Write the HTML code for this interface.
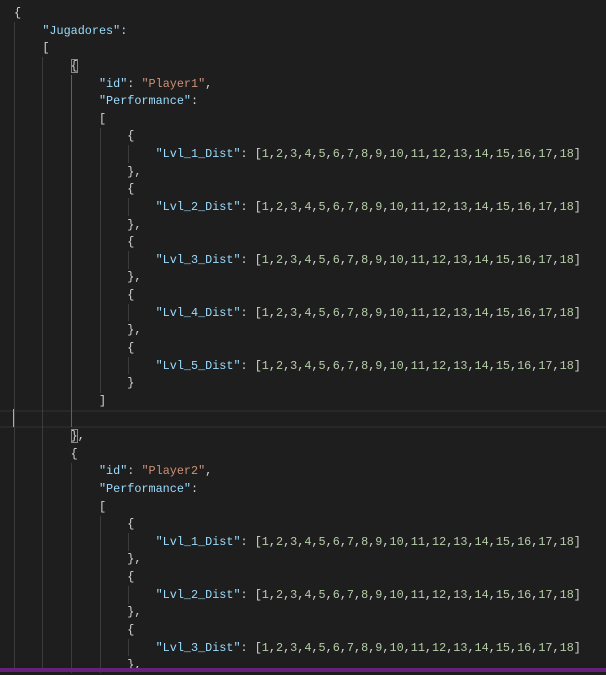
<!DOCTYPE html><html><head><style>
body{margin:0;width:606px;height:672px;background:#1e1e1e;overflow:hidden;position:relative;font-family:"Liberation Mono",monospace}
.c{position:absolute;left:14px;top:5px;font-size:11.8px;line-height:17.63px;white-space:pre;color:#d4d4d4}
.k{color:#9cdcfe}.s{color:#ce9178}.n{color:#b5cea8}
.g{position:absolute;width:1px;background:#3c3c3c}
.box{outline:1px solid #888;outline-offset:-1px}
</style></head><body>
<div style="position:absolute;left:0;top:409.7px;width:606px;height:14px;border-top:2px solid #282828;border-bottom:2px solid #282828"></div>
<div style="position:absolute;left:13px;top:409px;width:2px;height:18px;background:#aeafad"></div>
<div class="g" style="left:14px;top:22px;height:650px"></div>
<div class="g" style="left:42px;top:57px;height:615px"></div>
<div class="g" style="left:71px;top:74.7px;height:352px;background:#606060"></div>
<div class="g" style="left:71px;top:462.6px;height:210px"></div>
<div class="g" style="left:100px;top:127.6px;height:265px"></div>
<div class="g" style="left:100px;top:515.5px;height:157px"></div>
<div class="g" style="left:128px;top:145.2px;height:17.6px"></div>
<div class="g" style="left:128px;top:198.1px;height:17.6px"></div>
<div class="g" style="left:128px;top:251px;height:17.6px"></div>
<div class="g" style="left:128px;top:303.9px;height:17.6px"></div>
<div class="g" style="left:128px;top:356.8px;height:17.6px"></div>
<div class="g" style="left:128px;top:533.1px;height:17.6px"></div>
<div class="g" style="left:128px;top:586px;height:17.6px"></div>
<div class="g" style="left:128px;top:638.9px;height:17.6px"></div>
<div class="c">{
    <span class="k">"Jugadores"</span>:
    [
        <span class="box">{</span>
            <span class="k">"id"</span>: <span class="s">"Player1"</span>,
            <span class="k">"Performance"</span>:
            [
                {
                    <span class="k">"Lvl_1_Dist"</span>: [<span class="n">1</span>,<span class="n">2</span>,<span class="n">3</span>,<span class="n">4</span>,<span class="n">5</span>,<span class="n">6</span>,<span class="n">7</span>,<span class="n">8</span>,<span class="n">9</span>,<span class="n">10</span>,<span class="n">11</span>,<span class="n">12</span>,<span class="n">13</span>,<span class="n">14</span>,<span class="n">15</span>,<span class="n">16</span>,<span class="n">17</span>,<span class="n">18</span>]
                },
                {
                    <span class="k">"Lvl_2_Dist"</span>: [<span class="n">1</span>,<span class="n">2</span>,<span class="n">3</span>,<span class="n">4</span>,<span class="n">5</span>,<span class="n">6</span>,<span class="n">7</span>,<span class="n">8</span>,<span class="n">9</span>,<span class="n">10</span>,<span class="n">11</span>,<span class="n">12</span>,<span class="n">13</span>,<span class="n">14</span>,<span class="n">15</span>,<span class="n">16</span>,<span class="n">17</span>,<span class="n">18</span>]
                },
                {
                    <span class="k">"Lvl_3_Dist"</span>: [<span class="n">1</span>,<span class="n">2</span>,<span class="n">3</span>,<span class="n">4</span>,<span class="n">5</span>,<span class="n">6</span>,<span class="n">7</span>,<span class="n">8</span>,<span class="n">9</span>,<span class="n">10</span>,<span class="n">11</span>,<span class="n">12</span>,<span class="n">13</span>,<span class="n">14</span>,<span class="n">15</span>,<span class="n">16</span>,<span class="n">17</span>,<span class="n">18</span>]
                },
                {
                    <span class="k">"Lvl_4_Dist"</span>: [<span class="n">1</span>,<span class="n">2</span>,<span class="n">3</span>,<span class="n">4</span>,<span class="n">5</span>,<span class="n">6</span>,<span class="n">7</span>,<span class="n">8</span>,<span class="n">9</span>,<span class="n">10</span>,<span class="n">11</span>,<span class="n">12</span>,<span class="n">13</span>,<span class="n">14</span>,<span class="n">15</span>,<span class="n">16</span>,<span class="n">17</span>,<span class="n">18</span>]
                },
                {
                    <span class="k">"Lvl_5_Dist"</span>: [<span class="n">1</span>,<span class="n">2</span>,<span class="n">3</span>,<span class="n">4</span>,<span class="n">5</span>,<span class="n">6</span>,<span class="n">7</span>,<span class="n">8</span>,<span class="n">9</span>,<span class="n">10</span>,<span class="n">11</span>,<span class="n">12</span>,<span class="n">13</span>,<span class="n">14</span>,<span class="n">15</span>,<span class="n">16</span>,<span class="n">17</span>,<span class="n">18</span>]
                }
            ]

        <span class="box">}</span>,
        {
            <span class="k">"id"</span>: <span class="s">"Player2"</span>,
            <span class="k">"Performance"</span>:
            [
                {
                    <span class="k">"Lvl_1_Dist"</span>: [<span class="n">1</span>,<span class="n">2</span>,<span class="n">3</span>,<span class="n">4</span>,<span class="n">5</span>,<span class="n">6</span>,<span class="n">7</span>,<span class="n">8</span>,<span class="n">9</span>,<span class="n">10</span>,<span class="n">11</span>,<span class="n">12</span>,<span class="n">13</span>,<span class="n">14</span>,<span class="n">15</span>,<span class="n">16</span>,<span class="n">17</span>,<span class="n">18</span>]
                },
                {
                    <span class="k">"Lvl_2_Dist"</span>: [<span class="n">1</span>,<span class="n">2</span>,<span class="n">3</span>,<span class="n">4</span>,<span class="n">5</span>,<span class="n">6</span>,<span class="n">7</span>,<span class="n">8</span>,<span class="n">9</span>,<span class="n">10</span>,<span class="n">11</span>,<span class="n">12</span>,<span class="n">13</span>,<span class="n">14</span>,<span class="n">15</span>,<span class="n">16</span>,<span class="n">17</span>,<span class="n">18</span>]
                },
                {
                    <span class="k">"Lvl_3_Dist"</span>: [<span class="n">1</span>,<span class="n">2</span>,<span class="n">3</span>,<span class="n">4</span>,<span class="n">5</span>,<span class="n">6</span>,<span class="n">7</span>,<span class="n">8</span>,<span class="n">9</span>,<span class="n">10</span>,<span class="n">11</span>,<span class="n">12</span>,<span class="n">13</span>,<span class="n">14</span>,<span class="n">15</span>,<span class="n">16</span>,<span class="n">17</span>,<span class="n">18</span>]
                },
</div>
<div style="position:absolute;left:0;top:668px;width:606px;height:4px;background:#68217a"></div>
</body></html>
